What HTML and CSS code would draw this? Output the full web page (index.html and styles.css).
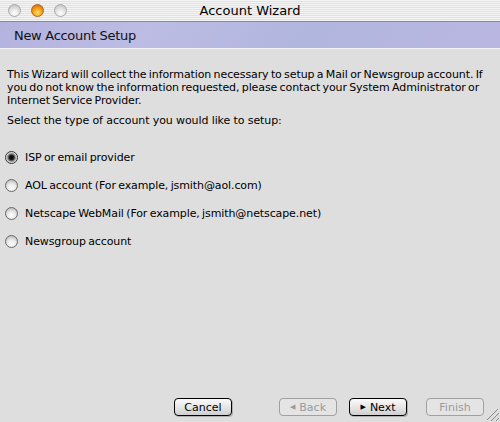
FILE: index.html
```html
<!DOCTYPE html>
<html lang="en">
<head>
    <meta charset="UTF-8">
    <title>Account Wizard</title>
    <link rel="stylesheet" href="styles.css">
</head>
<body>
<div class="window">
    <div class="titlebar">
        <div class="lights">
            <span class="light"></span>
            <span class="light light-min"></span>
            <span class="light"></span>
        </div>
        <div class="title">Account Wizard</div>
    </div>
    <div class="banner">New Account Setup</div>
    <main class="content">
        <p class="intro">This Wizard will collect the information necessary to setup a Mail or Newsgroup account. If you do not know the information requested, please contact your System Administrator or Internet Service Provider.</p>
        <p class="prompt">Select the type of account you would like to setup:</p>
        <div class="choices">
            <label class="choice"><span class="radio checked"></span>ISP or email provider</label>
            <label class="choice"><span class="radio"></span>AOL account (For example, jsmith@aol.com)</label>
            <label class="choice"><span class="radio"></span>Netscape WebMail (For example, jsmith@netscape.net)</label>
            <label class="choice"><span class="radio"></span>Newsgroup account</label>
        </div>
    </main>
    <footer class="buttons">
        <button class="btn cancel">Cancel</button>
        <button class="btn back" disabled><span class="arrow">&#9664;</span>Back</button>
        <button class="btn next"><span class="arrow">&#9654;</span>Next</button>
        <button class="btn finish" disabled>Finish</button>
        <span class="grip"></span>
    </footer>
</div>
</body>
</html>
```

FILE: styles.css
```css
html, body {
    margin: 0;
    padding: 0;
}
body {
    width: 500px;
    height: 422px;
    overflow: hidden;
    font-family: "DejaVu Sans", sans-serif;
    font-size: 11px;
    letter-spacing: -0.1px;
    word-spacing: -1px;
    color: #000;
    background: #dedede;
}
.window {
    display: flex;
    flex-direction: column;
    height: 422px;
}
.titlebar {
    height: 21px;
    display: flex;
    align-items: center;
    position: relative;
    background: repeating-linear-gradient(to bottom, #f4f4f4 0, #f4f4f4 1px, #e2e2e2 1px, #e2e2e2 2px);
    border-bottom: 1px solid #8a8a8a;
}
.lights {
    display: flex;
    gap: 10px;
    padding-left: 8px;
}
.light {
    width: 13px;
    height: 13px;
    border-radius: 50%;
    box-sizing: border-box;
    border: 1px solid #a9a9a9;
    background: radial-gradient(circle at 50% 75%, #ffffff 0, #e4e4e4 45%, #b8b8b8 100%);
}
.light-min {
    border-color: #b0621a;
    background: radial-gradient(circle at 50% 70%, #ffe060 0, #f8a020 45%, #c85a10 100%);
}
.title {
    position: absolute;
    left: 0;
    right: 0;
    text-align: center;
    font-size: 13px;
    letter-spacing: 0;
    word-spacing: 0;
}
.banner {
    height: 26px;
    line-height: 28px;
    padding-left: 14px;
    font-size: 13px;
    letter-spacing: -0.3px;
    word-spacing: 0;
    color: #111;
    background: linear-gradient(120deg, #b3b3de 0, #bcbce4 30%, #b1b6de 60%, #b9b7e1 100%);
    border-bottom: 1px solid #f4f4f4;
}
.content {
    flex: 1;
    padding: 19px 4px 0 7px;
}
.intro {
    margin: 0;
    line-height: 13px;
}
.prompt {
    margin: 7px 0 0 0;
    line-height: 13px;
    word-spacing: 0;
}
.choices {
    display: flex;
    flex-direction: column;
    gap: 15px;
    margin-top: 24px;
}
.choice {
    display: flex;
    align-items: center;
    gap: 7px;
    height: 13px;
    margin-left: -2px;
}
.radio {
    width: 13px;
    height: 13px;
    border-radius: 50%;
    box-sizing: border-box;
    border: 1px solid #6a6a6a;
    background: radial-gradient(circle at 50% 70%, #ffffff 0, #e8e8e8 45%, #a8a8a8 100%);
}
.radio.checked {
    border-color: #333;
    background: radial-gradient(circle at 50% 50%, #000 0, #222 30%, #777 45%, #f0f0f0 70%, #a0a0a0 100%);
}
.buttons {
    display: flex;
    align-items: flex-start;
    box-sizing: border-box;
    height: 38px;
    padding: 14px 0 0 174px;
    position: relative;
}
.btn {
    font-family: "DejaVu Sans", sans-serif;
    font-size: 11px;
    letter-spacing: 0;
    height: 18px;
    width: 58px;
    padding: 0;
    border: 1px solid #000;
    border-radius: 4px;
    background: linear-gradient(to bottom, #fafafa 0, #e2e2e2 60%, #cfcfcf 100%);
    color: #000;
    display: flex;
    align-items: center;
    justify-content: center;
    gap: 4px;
    box-shadow: 1px 1px 0 #b0b0b0;
}
.btn:disabled {
    border-color: #a0a0a0;
    color: #9a9a9a;
    background: #e4e4e4;
    box-shadow: none;
}
.arrow {
    font-size: 7px;
}
.back {
    margin-left: 47px;
}
.next {
    margin-left: 12px;
}
.finish {
    margin-left: 19px;
}
.grip {
    position: absolute;
    right: 1px;
    bottom: 1px;
    width: 12px;
    height: 12px;
    background: linear-gradient(135deg, transparent 0, transparent 45%, #888 45%, #888 50%, transparent 50%, transparent 65%, #888 65%, #888 70%, transparent 70%, transparent 85%, #888 85%, #888 90%, transparent 90%);
}
```
